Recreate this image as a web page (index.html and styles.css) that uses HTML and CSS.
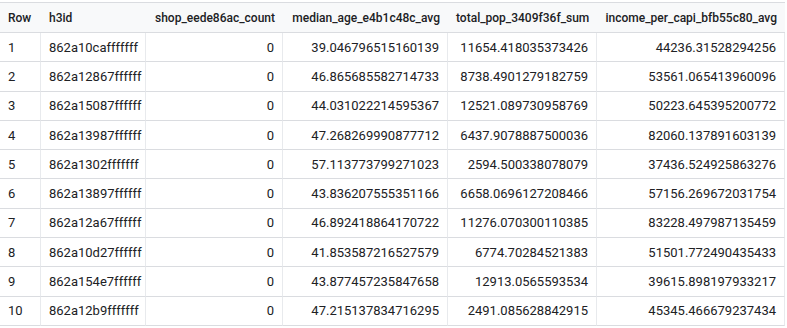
FILE: index.html
```html
<!DOCTYPE html>
<html lang="en">
  <head>
    <meta charset="UTF-8" />
    <meta name="viewport" content="width=device-width, initial-scale=1.0" />
    <title>Query results</title>
    <link rel="stylesheet" href="styles.css">
  </head>
  <body>
    <table class="results">
      <colgroup>
        <col class="c-row" />
        <col class="c-id" />
        <col class="c-shop" />
        <col class="c-age" />
        <col class="c-pop" />
        <col class="c-income" />
      </colgroup>
      <thead>
        <tr>
          <th>Row</th>
          <th>h3id</th>
          <th class="num">shop_eede86ac_count</th>
          <th class="num">median_age_e4b1c48c_avg</th>
          <th class="num">total_pop_3409f36f_sum</th>
          <th class="num">income_per_capi_bfb55c80_avg</th>
        </tr>
      </thead>
      <tbody>
        <tr><td>1</td><td>862a10cafffffff</td><td class="num">0</td><td class="num">39.046796515160139</td><td class="num">11654.418035373426</td><td class="num">44236.31528294256</td></tr>
        <tr><td>2</td><td>862a12867ffffff</td><td class="num">0</td><td class="num">46.865685582714733</td><td class="num">8738.4901279182759</td><td class="num">53561.065413960096</td></tr>
        <tr><td>3</td><td>862a15087ffffff</td><td class="num">0</td><td class="num">44.031022214595367</td><td class="num">12521.089730958769</td><td class="num">50223.645395200772</td></tr>
        <tr><td>4</td><td>862a13987ffffff</td><td class="num">0</td><td class="num">47.268269990877712</td><td class="num">6437.9078887500036</td><td class="num">82060.137891603139</td></tr>
        <tr><td>5</td><td>862a1302fffffff</td><td class="num">0</td><td class="num">57.113773799271023</td><td class="num">2594.500338078079</td><td class="num">37436.524925863276</td></tr>
        <tr><td>6</td><td>862a13897ffffff</td><td class="num">0</td><td class="num">43.836207555351166</td><td class="num">6658.0696127208466</td><td class="num">57156.269672031754</td></tr>
        <tr><td>7</td><td>862a12a67ffffff</td><td class="num">0</td><td class="num">46.892418864170722</td><td class="num">11276.070300110385</td><td class="num">83228.497987135459</td></tr>
        <tr><td>8</td><td>862a10d27ffffff</td><td class="num">0</td><td class="num">41.853587216527579</td><td class="num">6774.70284521383</td><td class="num">51501.772490435433</td></tr>
        <tr><td>9</td><td>862a154e7ffffff</td><td class="num">0</td><td class="num">43.877457235847658</td><td class="num">12913.0565593534</td><td class="num">39615.898197933217</td></tr>
        <tr><td>10</td><td>862a12b9fffffff</td><td class="num">0</td><td class="num">47.215137834716295</td><td class="num">2491.085628842915</td><td class="num">45345.466679237434</td></tr>
      </tbody>
    </table>
  </body>
</html>
```

FILE: styles.css
```css
* {
  margin: 0;
  padding: 0;
  box-sizing: border-box;
}
body {
  background: #fff;
  font-family: Roboto, "Noto Sans", Arial, sans-serif;
  font-size: 13px;
  color: #202124;
  padding-top: 2px;
}
.results {
  width: 785px;
  table-layout: fixed;
  border-collapse: separate;
  border-spacing: 0;
}
.c-row { width: 41px; }
.c-id { width: 105px; }
.c-shop { width: 137px; }
.c-age { width: 165px; }
.c-pop { width: 149px; }
.c-income { width: 188px; }

.results th {
  height: 31px;
  background: #f8f9fa;
  border-top: 1px solid #dadce0;
  border-bottom: 1px solid #dadce0;
  font-size: 12px;
  font-weight: 500;
  text-align: left;
  padding: 0 8px;
  white-space: nowrap;
}
.results td {
  height: 29.3px;
  border-bottom: 1px solid #dadce0;
  border-right: 1px solid #e8eaed;
  padding: 0 8px;
  white-space: nowrap;
}
.results th.num,
.results td.num {
  text-align: right;
}
```
